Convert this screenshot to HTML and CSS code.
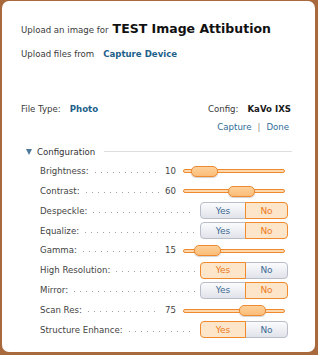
FILE: index.html
```html
<!DOCTYPE html>
<html>
<head>
<meta charset="utf-8">
<link rel="stylesheet" href="styles.css">
</head>
<body>
<div class="dialog">
  <div class="intro"><span>Upload an image for</span><span class="title">TEST Image Attibution</span></div>
  <div class="from"><span>Upload files from</span><a class="link">Capture Device</a></div>
  <div class="meta">
    <div class="pair"><span>File Type:</span><b class="link">Photo</b></div>
    <div class="pair"><span>Config:</span><b class="strong">KaVo IXS</b></div>
  </div>
  <div class="actions"><a class="act">Capture</a><span class="sep">|</span><a class="act">Done</a></div>
  <div class="section"><span class="tri"></span><span>Configuration</span><span class="rule"></span></div>
  <div class="rows">
    <div class="row"><span class="label">Brightness:</span><span class="leader"></span><span class="val">10</span><div class="slider"><span class="thumb" style="--v:10"></span></div></div>
    <div class="row"><span class="label">Contrast:</span><span class="leader"></span><span class="val">60</span><div class="slider"><span class="thumb" style="--v:60"></span></div></div>
    <div class="row"><span class="label">Despeckle:</span><span class="leader"></span><div class="toggle"><span class="opt yes">Yes</span><span class="opt no on">No</span></div></div>
    <div class="row"><span class="label">Equalize:</span><span class="leader"></span><div class="toggle"><span class="opt yes">Yes</span><span class="opt no on">No</span></div></div>
    <div class="row"><span class="label">Gamma:</span><span class="leader"></span><span class="val">15</span><div class="slider"><span class="thumb" style="--v:15"></span></div></div>
    <div class="row"><span class="label">High Resolution:</span><span class="leader"></span><div class="toggle"><span class="opt yes on">Yes</span><span class="opt no">No</span></div></div>
    <div class="row"><span class="label">Mirror:</span><span class="leader"></span><div class="toggle"><span class="opt yes">Yes</span><span class="opt no on">No</span></div></div>
    <div class="row"><span class="label">Scan Res:</span><span class="leader"></span><span class="val">75</span><div class="slider"><span class="thumb" style="--v:75"></span></div></div>
    <div class="row"><span class="label">Structure Enhance:</span><span class="leader"></span><div class="toggle"><span class="opt yes on">Yes</span><span class="opt no">No</span></div></div>
  </div>
</div>
</body>
</html>
```
FILE: styles.css
```css
html, body {
  margin: 0;
  padding: 0;
}
body {
  background: #a86a3c;
  font-family: "DejaVu Sans", Verdana, sans-serif;
  font-size: 8.6px;
  color: #3a3a3a;
}
.dialog {
  margin: 1px 3px 0 2px;
  height: 351px;
  box-sizing: border-box;
  background: #fff;
  border-radius: 7px;
  padding: 20px 27px 0 19px;
}
.intro {
  display: flex;
  align-items: baseline;
  height: 16px;
  line-height: 16px;
}
.title {
  font-size: 12.5px;
  font-weight: bold;
  color: #111;
  margin-left: 4px;
}
.from {
  margin-top: 11px;
  display: flex;
  height: 12px;
  line-height: 12px;
}
.link {
  color: #1d5f8a;
  font-weight: bold;
  margin-left: 9px;
}
.meta {
  margin-top: 43px;
  margin-right: -3px;
  display: flex;
  justify-content: space-between;
  height: 12px;
  line-height: 12px;
}
.pair {
  display: flex;
}
.strong {
  color: #1a1a1a;
  margin-left: 9px;
}
.actions {
  margin-top: 6px;
  margin-right: -1px;
  display: flex;
  justify-content: flex-end;
  height: 12px;
  line-height: 12px;
}
.act {
  color: #2e6c98;
}
.sep {
  color: #888;
  margin: 0 6px;
}
.section {
  margin-top: 13px;
  margin-right: -4px;
  display: flex;
  align-items: center;
  height: 12px;
  padding-left: 5px;
  color: #333;
}
.tri {
  width: 0;
  height: 0;
  border-left: 3px solid transparent;
  border-right: 3px solid transparent;
  border-top: 6px solid #4d7898;
  margin-right: 5px;
}
.rule {
  flex: 1;
  height: 1px;
  background: #dedede;
  margin-left: 9px;
  margin-top: -1px;
}
.rows {
  margin-top: 3px;
  padding-left: 19px;
}
.row {
  display: flex;
  align-items: center;
  height: 19.875px;
  color: #444;
}
.leader {
  flex: 1;
  height: 1px;
  margin: 3px 5px 0 6px;
  background: linear-gradient(to right, #a0a0a0 1px, transparent 1px) 0 0 / 6px 1px repeat-x;
}
.val {
  color: #444;
}
.slider {
  position: relative;
  width: 102px;
  height: 4px;
  margin: 1px 3px 0 7px;
  box-sizing: border-box;
  border: 1px solid #ef8a2c;
  background: #fdd7ae;
  border-radius: 2px;
}
.thumb {
  position: absolute;
  top: 50%;
  left: calc(var(--v) * 0.75px - 1px);
  width: 27px;
  height: 11px;
  margin-top: -5.5px;
  box-sizing: border-box;
  border: 1px solid #ee8a30;
  border-radius: 5px;
  background: linear-gradient(#fdd09a, #fbbd78);
  box-shadow: 0 1px 1px rgba(0, 0, 0, 0.18);
}
.toggle {
  display: flex;
  width: 88px;
  height: 17px;
}
.opt {
  box-sizing: border-box;
  display: flex;
  align-items: center;
  justify-content: center;
  font-size: 9px;
  border: 1px solid #b9bdc7;
  background: linear-gradient(#fbfbfd, #e0e3ea);
  color: #3d6b94;
}
.yes {
  width: 46px;
  border-radius: 4px 0 0 4px;
}
.no {
  width: 43px;
  margin-left: -1px;
  border-radius: 0 4px 4px 0;
}
.opt.on {
  position: relative;
  z-index: 1;
  border-color: #f08a2c;
  background: #fde5c9;
  color: #ec7a1e;
}
```
